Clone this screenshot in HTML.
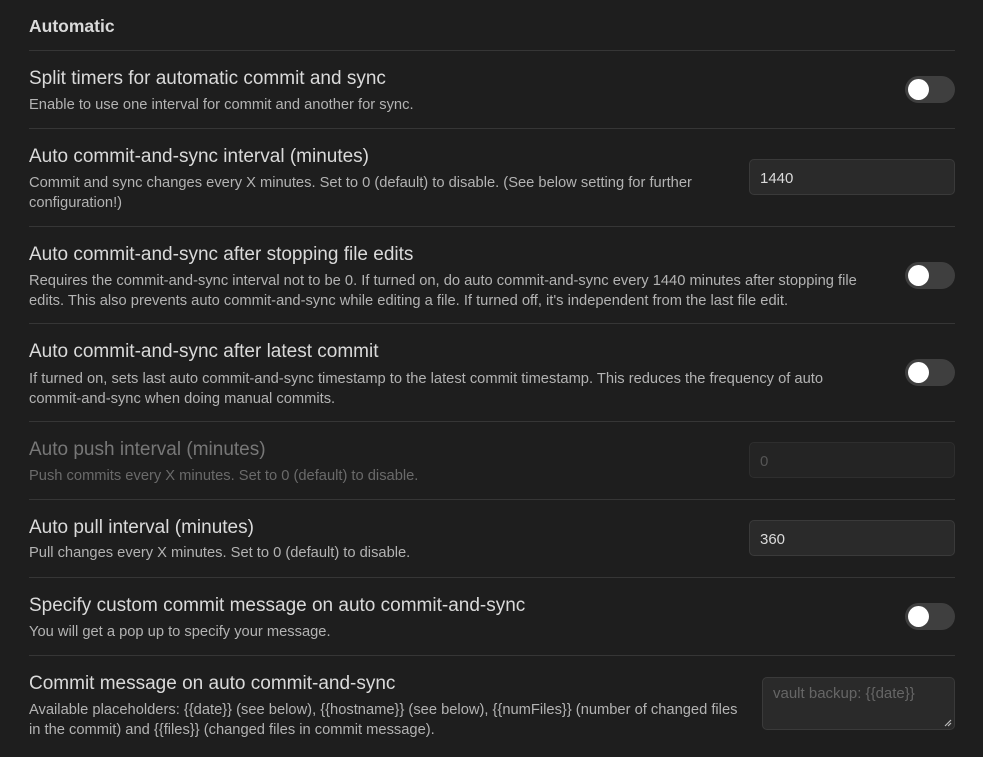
<!DOCTYPE html><html><head><style>
body{margin:0;background:#1e1e1e;width:983px;height:757px;overflow:hidden;font-family:"Liberation Sans",sans-serif;position:relative}
.t{position:absolute;left:29px;color:#dadada;font-size:19px;white-space:nowrap;line-height:22px;margin-top:2px}
.d{position:absolute;left:29px;color:#b3b3b3;font-size:14.7px;line-height:19.5px;width:858px;margin-top:2px}
.l{position:absolute;left:29px;width:926px;height:1px;background:#363636}
.tg{position:absolute;left:905px;width:50px;height:27px;border-radius:14px;background:#3f3f3f}
.tg::after{content:"";position:absolute;left:3px;top:3px;width:21px;height:21px;border-radius:50%;background:#fff}
.in{position:absolute;left:749px;width:194px;height:34px;border:1px solid #3a3a3a;border-radius:5px;background:#2a2a2a;color:#dadada;font-size:15px;line-height:38px;padding-left:10px;box-sizing:content-box}
</style></head><body>
<div class="t" style="top:13px;font-weight:bold;font-size:17.5px">Automatic</div>
<div class="l" style="top:50px"></div>
<div class="t" style="top:66px">Split timers for automatic commit and sync</div>
<div class="d" style="top:94px">Enable to use one interval for commit and another for sync.</div>
<div class="tg" style="top:76px"></div>
<div class="l" style="top:128px"></div>
<div class="t" style="top:144px">Auto commit-and-sync interval (minutes)</div>
<div class="d" style="top:172px;width:705px">Commit and sync changes every X minutes. Set to 0 (default) to disable. (See below setting for further configuration!)</div>
<div class="in" style="top:159px">1440</div>
<div class="l" style="top:226px"></div>
<div class="t" style="top:242px">Auto commit-and-sync after stopping file edits</div>
<div class="d" style="top:270px">Requires the commit-and-sync interval not to be 0. If turned on, do auto commit-and-sync every 1440 minutes after stopping file edits. This also prevents auto commit-and-sync while editing a file. If turned off, it's independent from the last file edit.</div>
<div class="tg" style="top:262px"></div>
<div class="l" style="top:323px"></div>
<div class="t" style="top:339px">Auto commit-and-sync after latest commit</div>
<div class="d" style="top:368px">If turned on, sets last auto commit-and-sync timestamp to the latest commit timestamp. This reduces the frequency of auto <span style="white-space:nowrap">commit-and-sync</span> when doing manual commits.</div>
<div class="tg" style="top:359px"></div>
<div class="l" style="top:421px"></div>
<div class="t" style="top:437px;color:#777">Auto push interval (minutes)</div>
<div class="d" style="top:465px;color:#6a6a6a">Push commits every X minutes. Set to 0 (default) to disable.</div>
<div class="in" style="top:442px;background:#242424;border-color:#2e2e2e;color:#555">0</div>
<div class="l" style="top:499px"></div>
<div class="t" style="top:515px">Auto pull interval (minutes)</div>
<div class="d" style="top:542px">Pull changes every X minutes. Set to 0 (default) to disable.</div>
<div class="in" style="top:520px">360</div>
<div class="l" style="top:577px"></div>
<div class="t" style="top:593px">Specify custom commit message on auto commit-and-sync</div>
<div class="d" style="top:621px">You will get a pop up to specify your message.</div>
<div class="tg" style="top:603px"></div>
<div class="l" style="top:655px"></div>
<div class="t" style="top:671px">Commit message on auto commit-and-sync</div>
<div class="d" style="top:699px;width:720px">Available placeholders: {{date}} (see below), {{hostname}} (see below), {{numFiles}} (number of changed files in the commit) and {{files}} (changed files in commit message).</div>
<div style="position:absolute;left:762px;top:677px;width:193px;height:53px;border:1px solid #3a3a3a;border-radius:5px;background:#2a2a2a;color:#666;font-size:15px;padding:7px 0 0 10px;box-sizing:border-box">vault backup: {{date}}
<svg style="position:absolute;right:2px;bottom:2px" width="8" height="8"><path d="M1 7L7 1M4 7L7 4" stroke="#bbb" stroke-width="1.2"/></svg></div>
</body></html>
